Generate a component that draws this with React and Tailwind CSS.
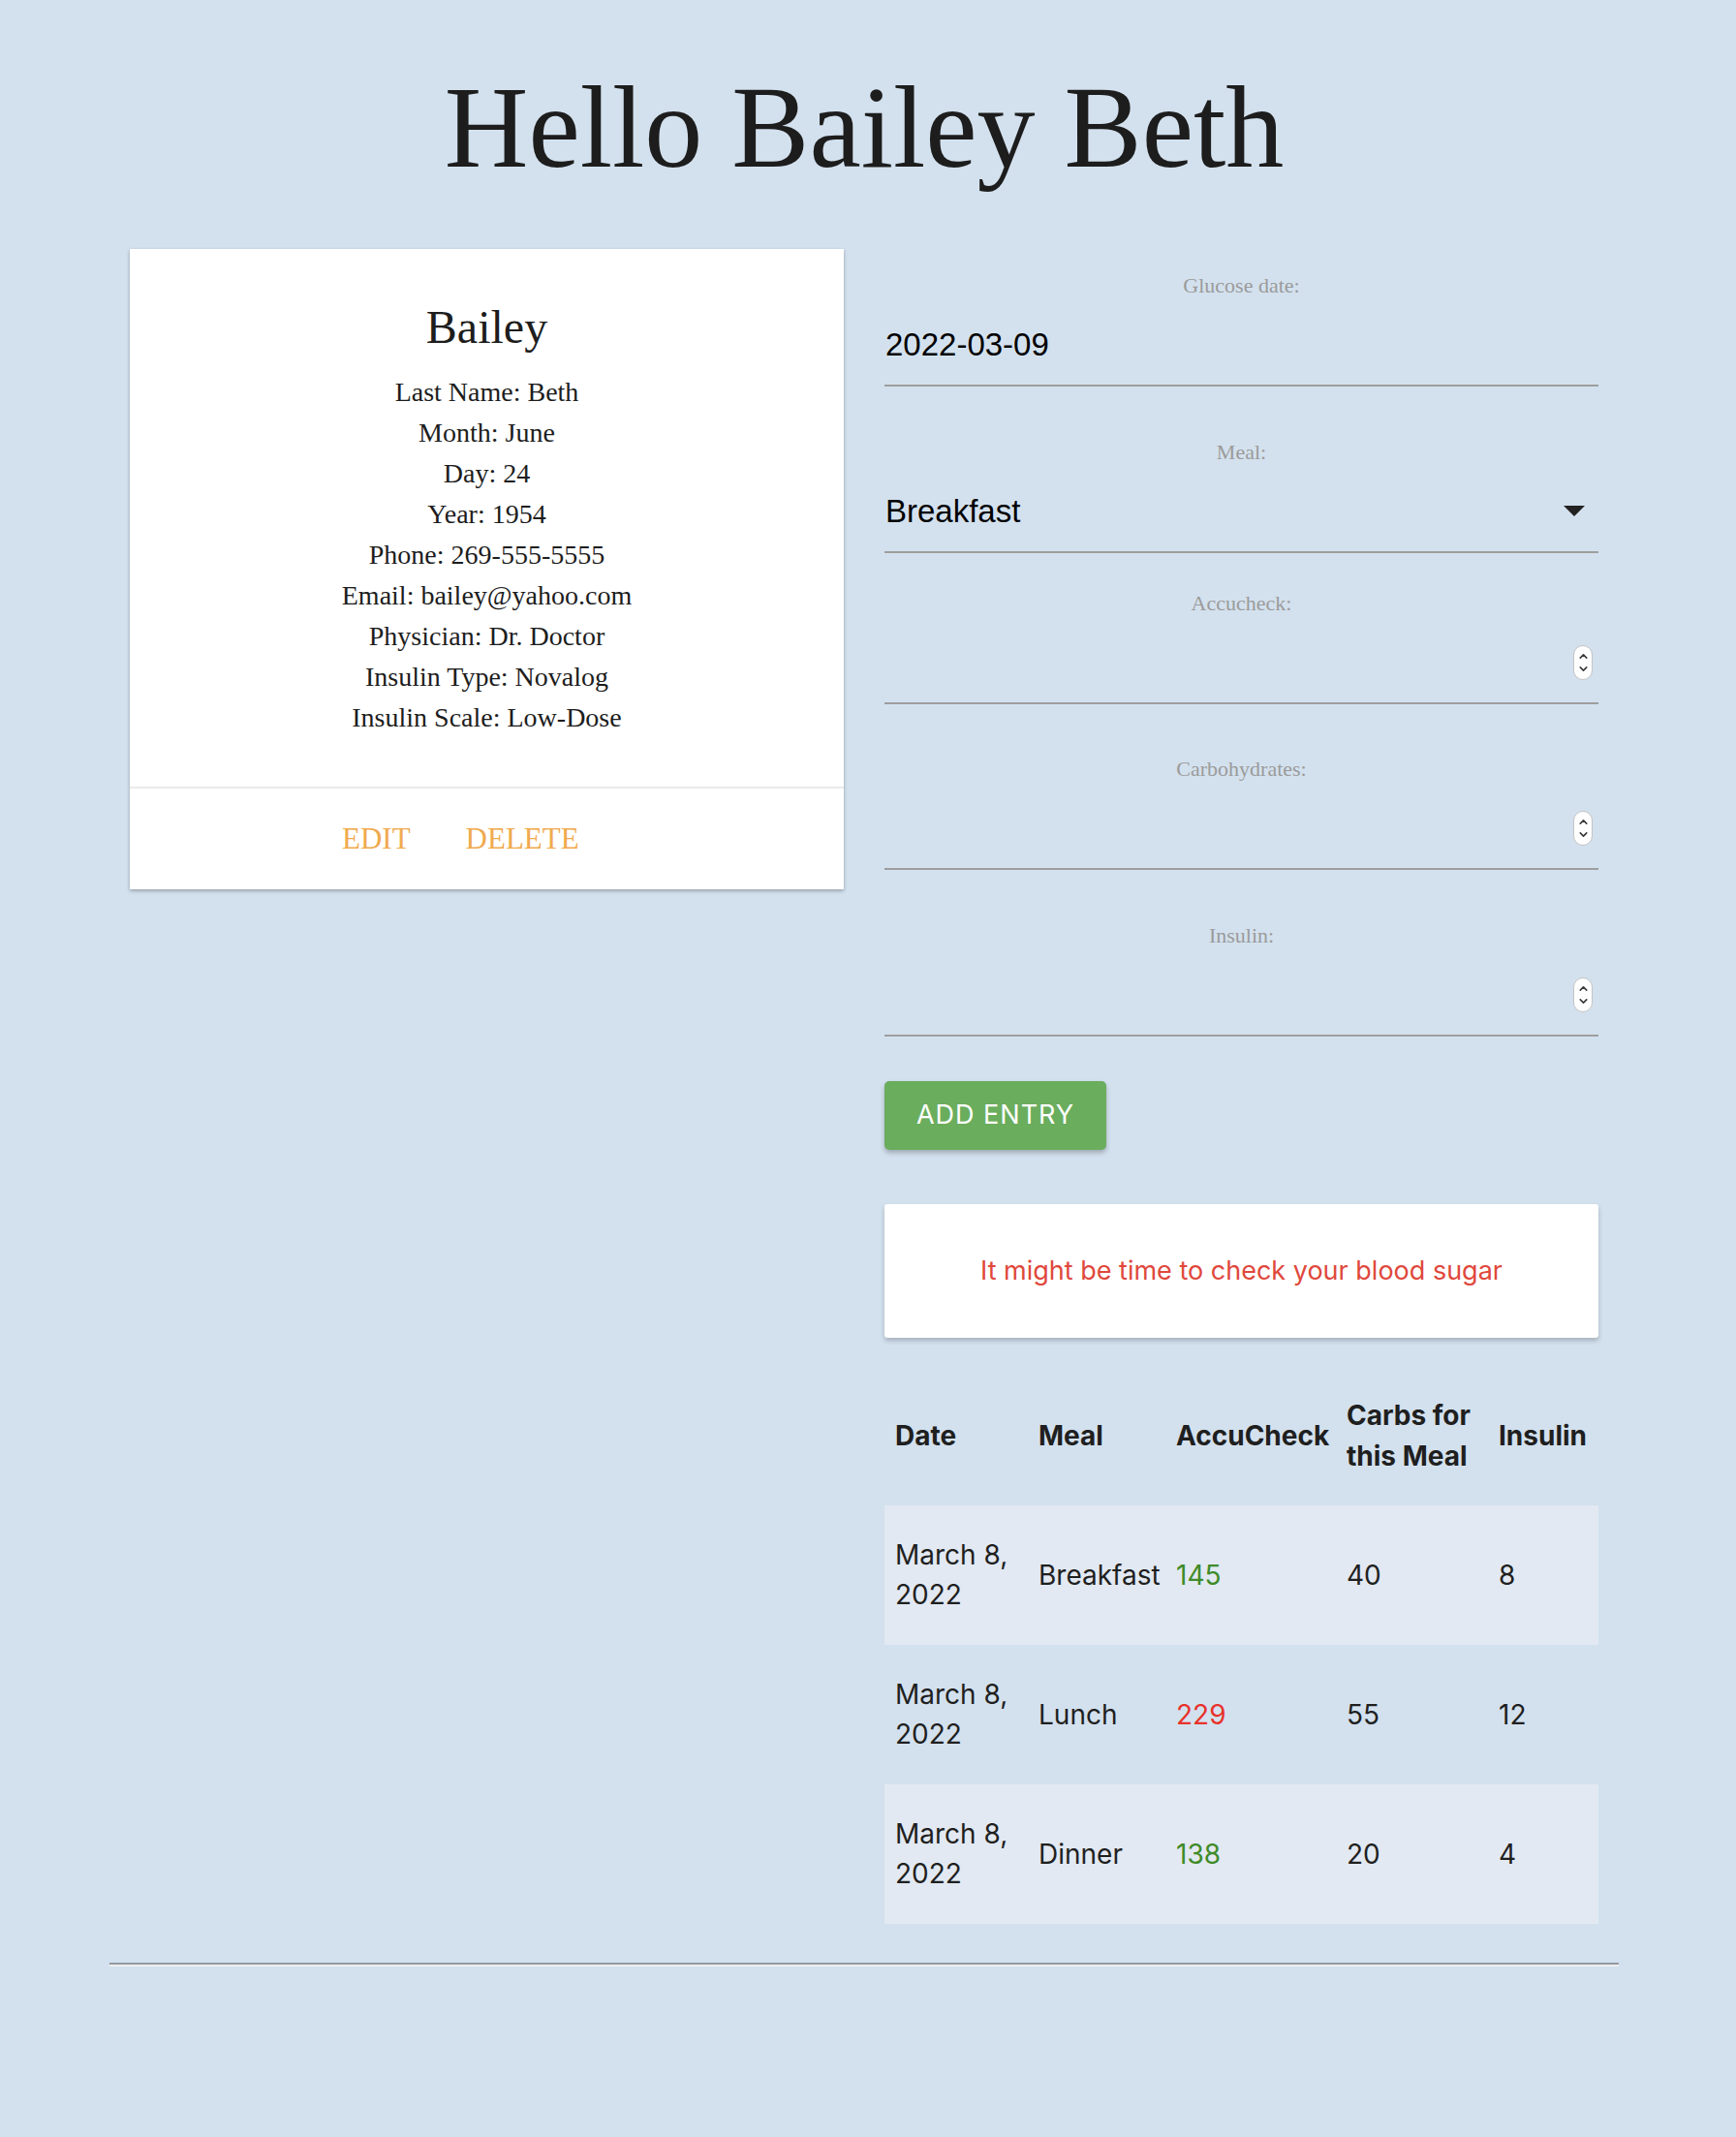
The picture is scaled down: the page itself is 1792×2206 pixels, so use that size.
import React from 'react';
import { ChevronUp, ChevronDown } from 'lucide-react';

const patient = {
  first: 'Bailey',
  rows: [
    ['Last Name', 'Beth'],
    ['Month', 'June'],
    ['Day', '24'],
    ['Year', '1954'],
    ['Phone', '269-555-5555'],
    ['Email', 'bailey@yahoo.com'],
    ['Physician', 'Dr. Doctor'],
    ['Insulin Type', 'Novalog'],
    ['Insulin Scale', 'Low-Dose'],
  ],
};

const entries = [
  { meal: 'Breakfast', accu: 145, carbs: 40, insulin: 8 },
  { meal: 'Lunch', accu: 229, carbs: 55, insulin: 12 },
  { meal: 'Dinner', accu: 138, carbs: 20, insulin: 4 },
];

const Spinner = () => (
  <div className="flex h-[36px] w-[20px] flex-col items-center justify-center rounded-full border border-[#c4c4c4] bg-white text-[#3a3a3a]">
    <ChevronUp className="h-[13px] w-[13px]" strokeWidth={3} />
    <ChevronDown className="h-[13px] w-[13px]" strokeWidth={3} />
  </div>
);

const Field = ({ label, className, children }) => (
  <div className={className}>
    <div className="h-[28px] text-center font-['Liberation_Serif',serif] text-[22px] leading-[28px] text-[#9b9b9b]">{label}</div>
    <div className="flex h-[90px] items-center border-b-2 border-[#9e9e9e] pt-[5px] font-['Liberation_Sans',sans-serif] text-[33px] text-black">
      {children}
    </div>
  </div>
);

export default function App() {
  return (
    <div className="min-h-[2206px] bg-[#d3e1ee] pt-[72px]">
      <div className="ml-[113px] w-[1558px]">
        <h1 className="text-center font-['Liberation_Serif',serif] text-[120px] leading-none text-[#1d1d1d]">Hello Bailey Beth</h1>

        <div className="mt-[65px] grid grid-cols-2">
          {/* profile card */}
          <div className="px-[21px]">
            <div className="bg-white shadow-[0_2px_4px_rgba(0,0,0,0.2),0_1px_3px_rgba(0,0,0,0.12)] font-['Liberation_Serif',serif] text-[#1d1d1d]">
              <div className="pt-[52px] text-center">
                <div className="text-[48px] leading-[58px]">{patient.first}</div>
                <div className="mt-[17px] text-[28px] leading-[42px]">
                  {patient.rows.map(([k, v]) => (
                    <div key={k}>{k}: {v}</div>
                  ))}
                </div>
              </div>
              <div className="mt-[50px] border-t-2 border-[#ebebeb]" />
              <div className="flex h-[104px] items-center gap-[57px] pl-[219px] text-[31px] text-[#f0aa4f]">
                <span>EDIT</span>
                <span>DELETE</span>
              </div>
            </div>
          </div>

          {/* entry form */}
          <div className="px-[21px] pt-[24px]">
            <Field label="Glucose date:" className="mb-[54px]">
              <span className="pl-px">2022-03-09</span>
            </Field>
            <Field label="Meal:" className="mb-[38px]">
              <span className="flex-1 pl-px">Breakfast</span>
              <svg width="22" height="11" viewBox="0 0 22 11" className="mr-[14px]">
                <polygon points="0,0 22,0 11,11" fill="#222" />
              </svg>
            </Field>
            <Field label="Accucheck:" className="mb-[53px]">
              <span className="flex-1" />
              <div className="mr-[6px]"><Spinner /></div>
            </Field>
            <Field label="Carbohydrates:" className="mb-[54px]">
              <span className="flex-1" />
              <div className="mr-[6px]"><Spinner /></div>
            </Field>
            <Field label="Insulin:">
              <span className="flex-1" />
              <div className="mr-[6px]"><Spinner /></div>
            </Field>

            <button className="mt-[46px] flex h-[71px] w-[229px] items-center justify-center rounded-[5px] bg-[#6aad5d] font-['Inter',sans-serif] text-[27px] tracking-[1px] text-white shadow-[0_3px_5px_rgba(0,0,0,0.25)]">
              ADD ENTRY
            </button>

            <div className="mt-[56px] flex h-[138px] items-center justify-center rounded-[3px] bg-white font-['Inter',sans-serif] text-[27px] text-[#e0483c] shadow-[0_3px_5px_rgba(0,0,0,0.22)]">
              It might be time to check your blood sugar
            </div>

            <table className="mt-[29px] w-full table-fixed font-['Inter',sans-serif] text-[28px] leading-[41px] text-[#1f1f1f]">
              <colgroup>
                <col className="w-[148px]" />
                <col className="w-[142px]" />
                <col className="w-[176px]" />
                <col className="w-[157px]" />
                <col className="w-[114px]" />
              </colgroup>
              <thead>
                <tr className="h-[144px] text-left font-bold leading-[42px]">
                  <th className="px-[11px] align-middle font-bold">Date</th>
                  <th className="px-[11px] align-middle font-bold">Meal</th>
                  <th className="whitespace-nowrap px-[11px] align-middle font-bold">AccuCheck</th>
                  <th className="whitespace-nowrap px-[11px] align-middle font-bold">Carbs for<br />this Meal</th>
                  <th className="px-[11px] align-middle font-bold">Insulin</th>
                </tr>
              </thead>
              <tbody>
                {entries.map((e, i) => (
                  <tr key={e.meal} className={i % 2 === 0 ? 'h-[144px] bg-[#e2e9f2]' : 'h-[144px]'}>
                    <td className="px-[11px] align-middle">March 8,<br />2022</td>
                    <td className="px-[11px] align-middle">{e.meal}</td>
                    <td className={`px-[11px] align-middle ${e.accu > 180 ? 'text-[#e8322b]' : 'text-[#3f8b29]'}`}>{e.accu}</td>
                    <td className="px-[11px] align-middle">{e.carbs}</td>
                    <td className="px-[11px] align-middle">{e.insulin}</td>
                  </tr>
                ))}
              </tbody>
            </table>
          </div>
        </div>

        <div className="mt-[40px] border-t-2 border-b-2 border-t-[#939aa1] border-b-[#eeeeee]" />
      </div>
    </div>
  );
}
